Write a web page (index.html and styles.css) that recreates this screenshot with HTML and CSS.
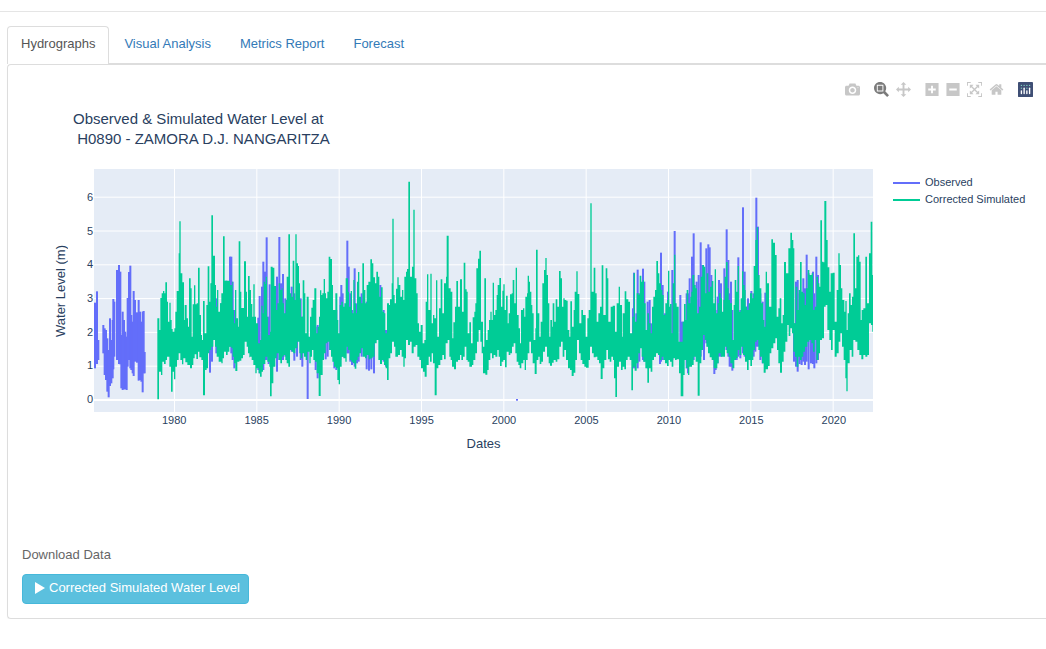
FILE: index.html
```html
<!DOCTYPE html>
<html lang="en">
<head>
<meta charset="utf-8">
<title>Hydrographs</title>
<link rel="stylesheet" href="styles.css">
</head>
<body>
<hr class="divider">
<main class="content">
  <nav class="tabs">
    <a class="tab tab-active" href="#hydrographs">Hydrographs</a>
    <a class="tab" href="#visual">Visual Analysis</a>
    <a class="tab" href="#metrics">Metrics Report</a>
    <a class="tab" href="#forecast">Forecast</a>
  </nav>
  <section class="panel">
    <div class="modebar">
      <button class="tool" aria-label="Download plot"><svg viewBox="0 0 1000 1000"><path transform="matrix(1 0 0 -1 0 850)" d="m500 450c-83 0-150-67-150-150 0-83 67-150 150-150 83 0 150 67 150 150 0 83-67 150-150 150z m400 150h-120c-16 0-34 13-39 29l-31 93c-6 15-23 28-40 28h-340c-16 0-34-13-39-28l-31-94c-6-15-23-28-40-28h-120c-55 0-100-45-100-100v-450c0-55 45-100 100-100h800c55 0 100 45 100 100v450c0 55-45 100-100 100z m-400-550c-138 0-250 112-250 250 0 138 112 250 250 250 138 0 250-112 250-250 0-138-112-250-250-250z m365 380c-19 0-35 16-35 35 0 19 16 35 35 35 19 0 35-16 35-35 0-19-16-35-35-35z"/></svg></button>
      <div class="tool-group">
        <button class="tool tool-active" aria-label="Zoom"><svg viewBox="0 0 1000 1000"><path transform="matrix(1 0 0 -1 0 850)" d="m1000-25l-250 251c40 63 63 138 63 218 0 224-182 406-407 406-224 0-406-182-406-406s183-406 407-406c80 0 155 22 218 62l250-250 125 125z m-812 250l0 438 437 0 0-438-437 0z m62 375l313 0 0-312-313 0 0 312z"/></svg></button>
        <button class="tool" aria-label="Pan"><svg viewBox="0 0 1000 1000"><path transform="matrix(1 0 0 -1 0 850)" d="m1000 350l-187 188 0-125-250 0 0 250 125 0-188 187-187-187 125 0 0-250-250 0 0 125-188-188 186-187 0 125 252 0 0-250-125 0 187-188 188 188-125 0 0 250 250 0 0-126 187 188z"/></svg></button>
      </div>
      <div class="tool-group">
        <button class="tool tool-small" aria-label="Zoom in"><svg viewBox="0 0 875 1000"><path transform="matrix(1 0 0 -1 0 850)" d="m1 787l0-875 875 0 0 875-875 0z m687-500l-187 0 0-187-125 0 0 187-188 0 0 125 188 0 0 187 125 0 0-187 187 0 0-125z"/></svg></button>
        <button class="tool tool-small" aria-label="Zoom out"><svg viewBox="0 0 875 1000"><path transform="matrix(1 0 0 -1 0 850)" d="m0 788l0-876 875 0 0 876-875 0z m688-500l-500 0 0 125 500 0 0-125z"/></svg></button>
        <button class="tool" aria-label="Autoscale"><svg viewBox="0 0 1000 1000"><path transform="matrix(1 0 0 -1 0 850)" d="m250 850l-187 0-63 0 0-62 0-188 63 0 0 188 187 0 0 62z m688 0l-188 0 0-62 188 0 0-188 62 0 0 188 0 62-62 0z m-875-938l0 188-63 0 0-188 0-62 63 0 187 0 0 62-187 0z m875 188l0-188-188 0 0-62 188 0 62 0 0 62 0 188-62 0z m-125 188l-1 0-93-94-156 156 156 156 92-93 2 0 0 250-250 0 0-2 93-92-156-156-156 156 94 92 0 2-250 0 0-250 0 0 93 93 157-156-157-156-93 94 0 0 0-250 250 0 0 0-94 93 156 157 156-157-93-93 0 0 250 0 0 250z"/></svg></button>
        <button class="tool" aria-label="Reset axes"><svg viewBox="0 0 928 1000"><path transform="matrix(1 0 0 -1 0 850)" d="m786 296v-267q0-15-11-26t-25-10h-214v214h-143v-214h-214q-15 0-25 10t-11 26v267q0 1 0 2t0 2l321 264 321-264q1-1 1-4z m124 39l-34-41q-5-5-12-6h-2q-7 0-12 3l-386 322-386-322q-7-4-13-4-7 2-12 7l-35 41q-4 5-3 13t6 12l401 334q18 15 42 15t43-15l136-114v109q0 8 5 13t13 5h107q8 0 13-5t5-13v-227l122-102q5-5 6-12t-4-13z"/></svg></button>
      </div>
      <a class="tool" href="#plotly" aria-label="Produced with Plotly"><svg viewBox="0 0 132 132"><rect width="132" height="132" rx="4" fill="#3f4f75"/><g fill="#80cfbe"><circle cx="30" cy="30" r="6"/><circle cx="54" cy="30" r="6"/><circle cx="78" cy="30" r="6"/><circle cx="102" cy="30" r="6"/><circle cx="30" cy="54" r="6"/><circle cx="78" cy="54" r="6"/></g><g fill="#fff"><rect x="24" y="72" width="12" height="36" rx="6"/><rect x="48" y="48" width="12" height="60" rx="6"/><rect x="72" y="72" width="12" height="36" rx="6"/><rect x="96" y="48" width="12" height="60" rx="6"/></g></svg></a>
    </div>
    <h1 class="chart-title">Observed &amp; Simulated Water Level at<br>&nbsp;H0890 - ZAMORA D.J. NANGARITZA</h1>
    <div class="chart">
      <div class="y-title"><span>Water Level (m)</span></div>
      <div class="y-axis"><span>6</span><span>5</span><span>4</span><span>3</span><span>2</span><span>1</span><span>0</span></div>
      <svg class="plot" viewBox="0 0 2337 729" preserveAspectRatio="none" role="img" aria-label="Water level over time">
        <g id="grid" class="grid"></g>
        <g id="observed" class="observed"></g>
        <g id="simulated" class="simulated"></g>
      </svg>
      <div class="legend">
        <div class="legend-item"><i class="swatch swatch-observed"></i>Observed</div>
        <div class="legend-item"><i class="swatch swatch-simulated"></i>Corrected Simulated</div>
      </div>
      <div class="x-axis"><span>1980</span><span>1985</span><span>1990</span><span>1995</span><span>2000</span><span>2005</span><span>2010</span><span>2015</span><span>2020</span></div>
      <div class="x-title">Dates</div>
    </div>
    <div class="download">
      <p class="download-label">Download Data</p>
      <button class="download-button"><svg class="play" viewBox="0 0 10 12"><path d="M0 0L10 6L0 12Z"/></svg>Corrected Simulated Water Level</button>
    </div>
  </section>
</main>
<script src="chart.js"></script>
</body>
</html>
```
FILE: styles.css
```css
* { box-sizing: border-box; }
body {
  margin: 0;
  background: #fff;
  color: #555;
  font: 13px/18px "Liberation Sans", Arial, sans-serif;
  overflow-x: hidden;
}
.divider { margin: 11px 0 14px; border: 0; border-top: 1px solid #e5e5e5; }
.content { padding-left: 7px; }
.tabs { display: flex; gap: 1px; border-bottom: 1px solid #ddd; }
.tab {
  padding: 8px 13px 10px;
  border: 1px solid transparent;
  border-bottom: 0;
  border-radius: 4px 4px 0 0;
  color: #337ab7;
  text-decoration: none;
}
.tab-active { margin-bottom: -1px; border-color: #ddd; background: #fff; color: #555; }
.panel {
  padding: 17px 0 14px 14px;
  border: 1px solid #ddd;
  border-right: 0;
  border-radius: 4px 0 0 4px;
  box-shadow: 0 1px 1px rgba(0, 0, 0, .05);
}
.modebar { display: flex; justify-content: flex-end; gap: 14px; padding-right: 13px; height: 15px; }
.tool-group { display: flex; gap: 7px; }
.tool { display: block; width: 15px; height: 15px; padding: 0; border: 0; background: none; fill: #c7c7c7; }
.tool svg { display: block; width: 100%; height: 100%; }
.tool-small { width: 14px; }
.tool-active { fill: #7b7b7b; }
.chart-title { margin: 12px 0 20px 51px; color: #2a3f5f; font-size: 15px; line-height: 20px; font-weight: 400; }
.chart {
  display: grid;
  grid-template-columns: 50px 22px minmax(0, 1fr) 173px;
  grid-template-rows: 243px auto auto;
  color: #2a3f5f;
  font-size: 11px;
}
.y-title { display: flex; align-items: center; justify-content: flex-end; padding-right: 2px; font-size: 13px; }
.y-title span { writing-mode: vertical-rl; transform: rotate(180deg); }
.y-axis { display: flex; flex-direction: column; height: 236px; margin-top: 11px; padding-right: 1px; }
.y-axis span { flex: 1; display: flex; align-items: center; justify-content: flex-end; }
.plot { display: block; width: 100%; height: 243px; background: #e5ecf6; }
.grid { stroke: #fff; stroke-width: 3; }
.grid .zero { stroke-width: 6; }
.observed { fill: #636efa; }
.simulated { fill: #00cc96; }
.legend { padding: 5px 0 0 20px; line-height: 17px; }
.legend-item { display: flex; align-items: center; gap: 5px; }
.swatch { width: 27px; height: 2px; }
.swatch-observed { background: #636efa; }
.swatch-simulated { background: #00cc96; }
.x-axis { grid-column: 3; display: flex; padding-left: 5%; margin-right: -2px; line-height: 16px; }
.x-axis span { flex: 1; text-align: center; }
.x-title { grid-column: 3; margin-top: 7px; font-size: 13px; text-align: center; }
.download { margin-top: 93px; }
.download-label { margin: 0 0 10px; color: #666; }
.download-button {
  display: flex;
  align-items: center;
  gap: 4px;
  height: 30px;
  padding: 0 8px 2px 12px;
  border: 1px solid #46b8da;
  border-radius: 4px;
  background: #5bc0de;
  color: #fff;
  font: inherit;
}
.play { width: 10px; height: 12px; fill: #fff; }
```
FILE: chart.js
```js
// Each block holds step outlines: high and low are "x level" pairs running from
// left to right; observed lists "x high low" columns. Offset places the block.
const blocks = [
  {
    offset: -162, end: 630,
    high: "352 475 358 510 361 414 365 400 369 393 373 400 376 367 381 425 384 485 388 428 392 480 395 507 398 515 403 505 406 455 410 393 416 280 418 184 422 340 427 367 432 480 434 435 440 475 444 500 447 355 452 385 455 530 458 433 462 376 466 433 470 430 474 323 479 465 483 525 486 540 489 423 494 520 499 435 503 319 508 425 511 370 514 166 519 287 525 375 528 440 531 390 535 455 540 430 544 400 549 229 554 362 570 375 576 365 578 450 582 490 585 390 589 475 594 500 596 244 601 395 604 444 612 304 618 395 621 470 624 348 629 390",
    low: "352 718 357 635 363 645 367 605 372 612 377 600 381 590 388 620 393 695 398 635 402 658 406 620 411 600 416 580 421 600 426 613 430 595 436 607 442 615 450 625 456 615 460 595 464 583 469 597 474 575 478 592 484 600 489 706 495 630 500 625 504 580 508 570 514 560 520 540 525 560 530 590 536 605 544 610 548 595 552 575 558 585 563 575 568 560 574 565 578 590 582 610 586 633 592 605 598 602 604 595 609 585 614 545 620 560 624 580 628 592",
    observed: "162 428 625 168 394 612 172 540 600 187 495 580 191 505 645 195 510 660 199 535 695 203 570 712 207 475 678 211 540 670 215 480 655 217 417 628 220 425 590 228 330 600 234 315 612 238 335 613 241 525 685 245 455 690 249 480 688 253 515 688 257 530 690 260 414 620 264 336 600 268 317 625 271 465 630 275 485 640 278 393 648 282 420 605 288 457 608 293 420 662 297 455 660 301 485 665 305 455 697 308 453 640 311 576 640 507 500 638 513 370 605 526 415 580 540 430 580 556 362 570 567 290 560 571 290 580 575 365 600 580 450 625"
  },
  {
    offset: 468, end: 630,
    high: "0 390 3 432 7 470 10 373 14 470 18 490 24 550 30 540 34 437 38 460 41 365 45 372 47 350 51 470 54 525 60 515 62 320 68 323 73 378 78 450 82 430 86 370 90 390 95 385 98 430 102 460 107 420 110 350 115 223 120 400 124 410 128 302 133 420 136 223 140 310 144 318 147 370 150 420 153 470 158 361 163 400 166 520 170 410 176 530 180 470 184 443 188 420 193 385 199 520 203 500 207 470 210 391 214 405 217 400 221 357 225 400 228 415 232 395 236 290 241 297 246 375 249 450 256 400 262 480 265 520 269 435 274 425 279 440 283 430 287 355 294 395 297 440 302 393 306 460 310 360 314 430 318 460 321 365 324 336 328 410 333 430 337 310 342 390 346 430 350 375 355 365 361 298 366 310 370 352 375 370 379 335 384 350 388 410 393 382 398 455 402 460 406 520 411 430 417 435 420 418 425 370 427 176 431 405 434 430 438 386 442 352 446 375 451 410 456 390 460 420 463 350 468 335 471 327 475 65 480 350 486 320 490 149 494 355 499 400 503 490 507 515 512 495 518 550 523 540 527 425 531 343 535 450 541 341 545 490 549 465 553 475 558 361 562 530 567 445 572 358 577 460 582 370 588 350 590 227 596 385 602 395 607 535 610 487 615 440 619 363 624 440",
    low: "0 590 5 600 10 615 16 640 20 625 26 640 30 650 35 635 39 612 46 590 52 605 58 620 60 709 65 670 70 620 76 595 80 580 86 600 91 610 96 590 101 585 106 600 110 610 115 620 120 570 125 575 130 580 136 565 142 545 148 580 152 595 157 580 162 590 167 600 172 575 178 610 182 590 186 570 190 600 195 605 200 640 206 708 212 645 218 600 222 580 227 550 232 545 238 570 243 590 247 605 252 620 258 625 262 660 266 673 270 620 275 590 280 595 286 605 290 560 294 570 299 600 304 605 309 610 314 626 319 600 323 590 328 580 333 565 338 590 345 595 350 585 356 598 362 595 368 590 374 550 380 540 385 600 390 612 396 600 402 615 407 625 411 660 416 595 421 580 426 545 432 560 436 590 444 585 450 570 455 590 460 620 464 595 468 540 474 555 480 545 485 580 491 560 497 555 502 590 508 600 513 625 519 635 524 650 530 615 536 590 540 605 545 580 549 610 554 706 560 625 565 615 571 600 577 585 582 598 587 550 593 540 598 590 602 600 606 620 612 628 618 605 624 600",
    observed: "22 473 630 26 408 640 33 380 630 37 305 630 42 335 600 47 232 600 53 470 612 56 373 600 78 350 635 85 231 600 90 370 600 96 342 600 103 415 590 122 380 575 130 400 602 138 380 590 149 415 600 154 470 620 170 530 717 194 500 630 200 495 655 216 405 600 224 450 598 230 450 590 237 400 570 250 450 625 256 450 630 268 410 600 271 375 590 275 400 590 289 242 580 293 320 580 298 400 605 303 450 615 311 325 620 318 430 610 323 450 605 332 400 590 347 425 628 354 450 632 361 450 628 369 450 640 388 375 600 391 460 600 398 450 605 405 510 620"
  },
  {
    offset: 1098, end: 630,
    high: "0 358 6 455 11 308 16 388 20 395 23 520 28 487 33 550 38 472 43 455 46 430 49 325 54 296 58 272 63 485 69 560 73 355 78 540 83 510 87 480 91 455 95 480 98 368 102 465 106 450 110 405 113 375 118 354 123 440 127 392 130 373 134 450 138 407 143 490 146 460 150 403 155 400 158 360 163 430 167 323 171 465 176 505 180 550 183 450 189 445 193 470 196 410 201 400 203 347 207 365 210 395 214 435 217 460 221 540 226 505 228 269 233 460 238 530 242 485 247 370 252 330 256 294 260 345 264 430 268 530 271 480 276 500 278 430 283 485 287 418 292 440 297 333 302 355 306 440 310 415 314 420 319 422 323 510 328 530 331 424 336 500 341 450 344 395 349 334 353 402 358 490 364 450 369 465 377 530 382 475 386 450 391 130 395 395 401 323 406 400 410 485 415 460 420 440 425 316 430 465 437 325 442 355 445 485 452 440 458 437 465 515 470 430 476 380 480 435 486 530 488 460 494 394 499 418 505 425 510 520 517 470 521 340 525 485 530 400 536 405 539 347 544 365 548 360 552 430 557 510 562 460 567 490 572 520 576 440 580 410 585 390 589 303 594 340 598 370 603 390 607 405 611 465 616 430 621 420 624 332 628 440",
    low: "0 585 4 600 9 590 14 560 19 600 23 605 28 620 36 615 40 600 46 580 51 545 56 510 61 545 65 580 69 640 76 644 82 630 86 600 91 580 96 595 101 585 106 590 112 570 116 590 120 618 125 605 130 600 135 622 140 575 146 585 151 580 156 560 161 550 166 580 170 605 175 615 179 625 184 610 190 600 194 630 198 600 203 580 208 545 213 580 218 610 224 642 230 600 235 590 239 612 244 605 249 575 255 560 261 590 266 610 270 617 276 608 281 600 287 605 292 598 298 560 303 545 308 590 313 570 318 600 324 625 330 630 335 648 341 638 346 600 351 540 357 580 362 600 367 612 373 620 378 623 386 600 390 560 396 580 401 592 407 590 412 600 417 610 422 657 428 625 433 600 439 570 444 598 449 605 454 590 459 600 462 655 466 711 471 620 477 605 483 630 488 620 493 628 498 600 503 590 509 600 514 691 519 620 524 632 530 610 535 580 540 565 545 590 550 605 556 625 562 668 567 625 572 635 577 600 582 590 588 580 594 585 600 600 605 590 610 600 615 610 621 618 626 600",
    observed: "168 717 722 516 445 600 519 338 625 526 460 600 530 329 625 535 400 605 546 326 600 550 365 605 560 425 625 566 420 600 571 490 600 582 450 590 597 400 612 600 278 605 605 375 600 612 460 600 621 395 600"
  },
  {
    offset: 1728, end: 609,
    high: "0 432 5 520 8 370 12 284 16 430 20 440 26 545 33 545 38 485 42 432 47 480 50 390 55 430 61 410 64 395 67 345 73 375 77 385 81 460 87 440 92 350 97 315 102 320 106 400 110 340 115 395 120 380 125 363 130 430 134 328 138 460 143 430 147 400 152 415 156 455 160 420 164 350 168 306 173 385 176 420 180 430 186 540 191 435 194 360 199 395 203 318 207 455 212 415 216 334 220 375 224 390 227 440 231 450 236 430 240 400 247 415 251 318 256 240 260 202 264 345 269 385 274 430 279 480 283 500 287 335 291 370 297 440 304 238 309 248 315 285 320 470 325 445 329 415 334 490 338 465 342 306 348 340 355 265 361 218 366 240 370 265 373 490 377 380 382 450 386 390 390 306 395 395 399 400 404 435 408 385 413 330 418 345 425 340 429 450 434 440 439 350 444 370 448 380 451 181 456 305 460 307 463 123 469 240 473 322 478 395 482 340 488 338 494 485 500 390 505 280 509 315 513 385 517 420 523 455 526 423 530 510 533 460 537 400 542 435 546 410 550 220 555 385 559 290 564 286 568 305 572 480 575 450 580 445 586 290 591 430 597 280 602 185 607 345",
    low: "0 605 5 620 10 595 15 600 20 598 27 640 32 709 40 645 44 600 49 625 54 645 58 620 66 615 71 590 77 605 83 707 89 610 94 570 99 525 104 540 109 560 114 580 119 592 125 600 131 625 137 625 142 610 146 580 152 590 158 590 165 560 170 580 176 590 181 610 187 625 193 600 198 595 203 570 208 585 214 560 219 585 225 605 231 630 236 600 241 618 246 600 250 570 255 545 260 540 265 570 270 590 276 610 281 638 287 628 294 618 299 580 304 565 310 550 316 535 321 570 325 610 330 638 336 605 341 575 346 545 352 495 356 528 361 505 366 520 370 575 375 590 380 620 385 590 390 600 395 590 400 575 405 560 412 545 418 540 424 550 429 575 434 540 439 600 445 580 450 540 456 535 462 440 467 435 472 510 478 540 483 570 488 510 494 590 500 580 506 545 511 520 516 560 521 600 526 655 529 694 533 610 539 570 545 590 550 540 556 545 562 570 568 585 574 598 580 585 586 590 592 585 597 490 603 495 607 515",
    observed: "4 330 600 11 213 590 28 405 600 33 485 600 38 485 600 47 400 625 51 400 640 56 355 600 63 290 600 68 220 600 77 365 590 83 345 590 89 247 590 94 315 570 99 350 600 106 265 550 112 253 560 116 262 560 121 345 580 130 450 642 134 450 630 140 410 610 144 360 590 150 370 590 160 325 570 167 208 570 172 300 590 176 400 620 180 365 620 184 450 632 197 420 600 202 292 590 208 450 595 216 142 580 221 335 590 227 440 600 231 415 600 241 393 600 248 400 590 253 350 575 256 113 560 261 200 560 268 400 600 275 425 610 283 398 600 369 490 605 375 365 620 380 360 635 386 400 612 392 400 615 397 355 605 402 385 615 407 284 605 413 340 628 420 350 610 426 335 612 430 400 625 436 290 610 441 345 600"
  }
];
const top0 = 27;
const draw = (id, name, attrs) => {
  const el = document.createElementNS("http://www.w3.org/2000/svg", name);
  for (const key in attrs) el.setAttribute(key, attrs[key]);
  document.getElementById(id).append(el);
};
for (let i = 0; i < 9; i++) {
  const x = 241.5 + i * 247;
  draw("grid", "line", { x1: x, x2: x, y1: 0, y2: 729 });
}
for (let i = 0; i < 7; i++) {
  const y = 693 - i * 101.4;
  draw("grid", "line", { x1: 0, x2: 2337, y1: y, y2: y, class: i ? "" : "zero" });
}
const group = (text, size) => {
  const n = text.split(" ").map(Number);
  return Array.from({ length: n.length / size }, (_, i) => n.slice(i * size, i * size + size));
};
for (const b of blocks) {
  for (const [x, high, low] of group(b.observed, 3)) {
    draw("observed", "rect", { x: x + b.offset, y: high - top0, width: 6, height: low - high });
  }
  const high = group(b.high, 2);
  const low = group(b.low, 2);
  let d = `M${high[0][0] + b.offset} ${high[0][1] - top0}`;
  for (const [x, y] of high) d += `H${x + b.offset}V${y - top0}`;
  d += `H${b.end + b.offset}`;
  for (const [x, y] of low.reverse()) d += `V${y - top0}H${x + b.offset}`;
  draw("simulated", "path", { d: d + "Z" });
}
```
